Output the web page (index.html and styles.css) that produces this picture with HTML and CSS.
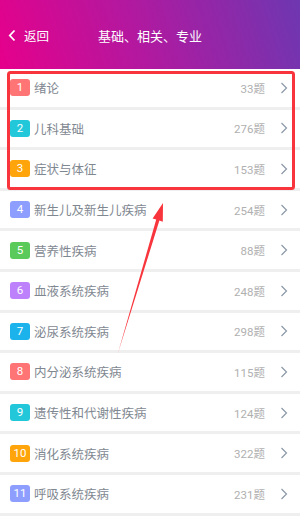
FILE: index.html
```html
<!DOCTYPE html>
<html lang="zh-CN">
<head>
    <meta charset="UTF-8">
    <meta name="viewport" content="width=device-width, initial-scale=1.0">
    <title>基础、相关、专业</title>
    <link rel="stylesheet" href="styles.css">
</head>
<body>
    <div class="page">
        <div class="header">
            <div class="back">
                <svg width="8" height="13" viewBox="0 0 8 13"><path d="M6.5 1.5 L1.8 6.5 L6.5 11.5" fill="none" stroke="#fff" stroke-width="1.8"/></svg>
                <span>返回</span>
            </div>
            <div class="title">基础、相关、专业</div>
        </div>

        <div class="list">
            <div class="row"><span class="num c1">1</span><span class="name">绪论</span><span class="count">33题</span><svg class="arrow" width="8" height="12" viewBox="0 0 8 12"><path d="M1.5 1 L6.5 6 L1.5 11" fill="none" stroke="#8b98a6" stroke-width="1.2"/></svg></div>
            <div class="row"><span class="num c2">2</span><span class="name">儿科基础</span><span class="count">276题</span><svg class="arrow" width="8" height="12" viewBox="0 0 8 12"><path d="M1.5 1 L6.5 6 L1.5 11" fill="none" stroke="#8b98a6" stroke-width="1.2"/></svg></div>
            <div class="row"><span class="num c3">3</span><span class="name">症状与体征</span><span class="count">153题</span><svg class="arrow" width="8" height="12" viewBox="0 0 8 12"><path d="M1.5 1 L6.5 6 L1.5 11" fill="none" stroke="#8b98a6" stroke-width="1.2"/></svg></div>
            <div class="row"><span class="num c4">4</span><span class="name">新生儿及新生儿疾病</span><span class="count">254题</span><svg class="arrow" width="8" height="12" viewBox="0 0 8 12"><path d="M1.5 1 L6.5 6 L1.5 11" fill="none" stroke="#8b98a6" stroke-width="1.2"/></svg></div>
            <div class="row"><span class="num c5">5</span><span class="name">营养性疾病</span><span class="count">88题</span><svg class="arrow" width="8" height="12" viewBox="0 0 8 12"><path d="M1.5 1 L6.5 6 L1.5 11" fill="none" stroke="#8b98a6" stroke-width="1.2"/></svg></div>
            <div class="row"><span class="num c6">6</span><span class="name">血液系统疾病</span><span class="count">248题</span><svg class="arrow" width="8" height="12" viewBox="0 0 8 12"><path d="M1.5 1 L6.5 6 L1.5 11" fill="none" stroke="#8b98a6" stroke-width="1.2"/></svg></div>
            <div class="row"><span class="num c7">7</span><span class="name">泌尿系统疾病</span><span class="count">298题</span><svg class="arrow" width="8" height="12" viewBox="0 0 8 12"><path d="M1.5 1 L6.5 6 L1.5 11" fill="none" stroke="#8b98a6" stroke-width="1.2"/></svg></div>
            <div class="row"><span class="num c1">8</span><span class="name">内分泌系统疾病</span><span class="count">115题</span><svg class="arrow" width="8" height="12" viewBox="0 0 8 12"><path d="M1.5 1 L6.5 6 L1.5 11" fill="none" stroke="#8b98a6" stroke-width="1.2"/></svg></div>
            <div class="row"><span class="num c2">9</span><span class="name">遗传性和代谢性疾病</span><span class="count">124题</span><svg class="arrow" width="8" height="12" viewBox="0 0 8 12"><path d="M1.5 1 L6.5 6 L1.5 11" fill="none" stroke="#8b98a6" stroke-width="1.2"/></svg></div>
            <div class="row"><span class="num c3">10</span><span class="name">消化系统疾病</span><span class="count">322题</span><svg class="arrow" width="8" height="12" viewBox="0 0 8 12"><path d="M1.5 1 L6.5 6 L1.5 11" fill="none" stroke="#8b98a6" stroke-width="1.2"/></svg></div>
            <div class="row"><span class="num c4">11</span><span class="name">呼吸系统疾病</span><span class="count">231题</span><svg class="arrow" width="8" height="12" viewBox="0 0 8 12"><path d="M1.5 1 L6.5 6 L1.5 11" fill="none" stroke="#8b98a6" stroke-width="1.2"/></svg></div>
            <div class="row rest"></div>
        </div>

        <!-- annotation drawn over the screenshot -->
        <svg class="mark" width="300" height="521" viewBox="0 0 300 521">
            <rect x="8.5" y="72.5" width="285" height="116" rx="2" fill="none" stroke="#f8353c" stroke-width="3"/>
            <polygon points="118,353 156.2,219.6 152.6,218.6 163,203 162.8,221.8 159.4,220.6" fill="#f8353c"/>
        </svg>
    </div>
</body>
</html>
```

FILE: styles.css
```css
body {margin: 0; padding: 0; overflow: hidden;}
.page {
    width: 300px;
    height: 521px;
    position: relative;
    overflow: hidden;
    background-color: #efefef;
    font-family: "Noto Sans CJK SC", "Noto Sans", sans-serif;
}
.header {
    height: 69px;
    display: flex;
    align-items: center;
    position: relative;
    background: linear-gradient(72deg, #e6008b 0%, #b3189f 45%, #6e37b1 100%);
    color: #fff;
}
.back {
    display: flex;
    align-items: center;
    gap: 8px;
    padding-left: 8px;
    font-size: 12.5px;
    margin-top: 1px;
}
.back svg {display: block;}
.title {
    position: absolute;
    left: 0;
    right: 0;
    text-align: center;
    font-size: 13px;
    pointer-events: none;
    margin-top: 1px;
}
.list {
    display: flex;
    flex-direction: column;
    gap: 3px;
}
.row {
    height: 37.6px;
    flex-shrink: 0;
    background-color: #fff;
    display: flex;
    align-items: center;
    padding: 0 12px 0 10px;
}
.num {
    width: 20px;
    height: 17px;
    border-radius: 3px;
    color: #fff;
    font-family: Roboto, "Noto Sans", sans-serif;
    font-size: 11.5px;
    line-height: 17px;
    text-align: center;
    flex-shrink: 0;
}
.c1 {background-color: #ff7474;}
.c2 {background-color: #22c7da;}
.c3 {background-color: #ffa40a;}
.c4 {background-color: #8d9eff;}
.c5 {background-color: #5acb5a;}
.c6 {background-color: #bd82fb;}
.c7 {background-color: #1cb3ec;}
.name {
    margin-left: 4px;
    font-size: 12.5px;
    color: #7f8891;
}
.count {
    margin-left: auto;
    font-family: Roboto, "Noto Sans CJK SC", sans-serif;
    font-size: 11.5px;
    color: #b0b0b0;
}
.arrow {
    margin-left: 15px;
    display: block;
}
.mark {
    position: absolute;
    left: 0;
    top: 0;
    pointer-events: none;
}
```
